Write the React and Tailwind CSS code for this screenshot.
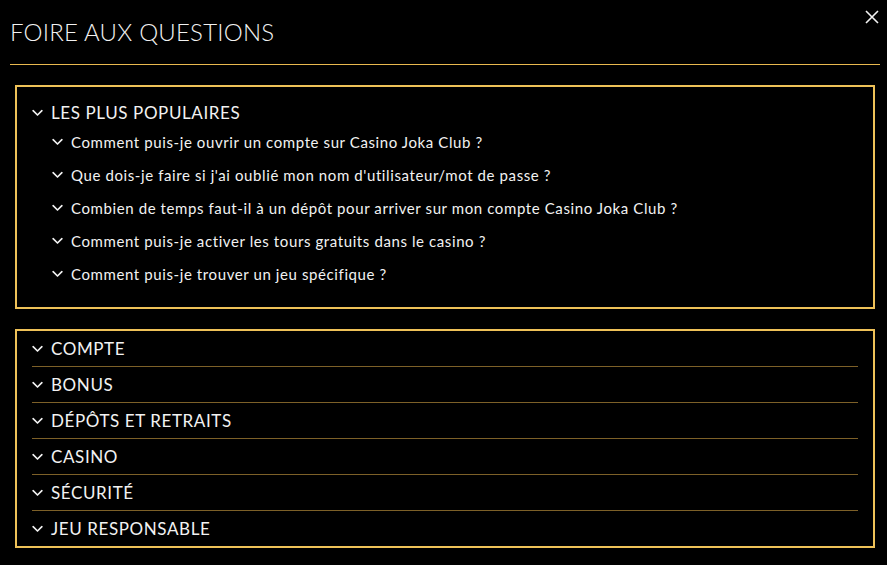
import React from 'react';

const popular = [
  'Comment puis-je ouvrir un compte sur Casino Joka Club ?',
  "Que dois-je faire si j'ai oublié mon nom d'utilisateur/mot de passe ?",
  'Combien de temps faut-il à un dépôt pour arriver sur mon compte Casino Joka Club ?',
  'Comment puis-je activer les tours gratuits dans le casino ?',
  'Comment puis-je trouver un jeu spécifique ?',
];

const sections = ['COMPTE', 'BONUS', 'DÉPÔTS ET RETRAITS', 'CASINO', 'SÉCURITÉ', 'JEU RESPONSABLE'];

const Chevron = ({ className = '' }) => (
  <svg viewBox="0 0 12 8" className={`w-[11px] h-[8px] shrink-0 ${className}`} fill="none">
    <path d="M1.2 1.5 L6 6.2 L10.8 1.5" stroke="#f2f2f2" strokeWidth="1.8" strokeLinecap="round" strokeLinejoin="round" />
  </svg>
);

export default function App() {
  return (
    <div className="w-[887px] h-[565px] bg-black text-[#f2f2f2] overflow-hidden relative" style={{ fontFamily: 'Lato, "Liberation Sans", sans-serif' }}>
      <button className="absolute right-[8px] top-[10px] w-[14px] h-[14px]">
        <svg viewBox="0 0 14 14" className="w-[14px] h-[14px]">
          <path d="M1 1 L13 13 M13 1 L1 13" stroke="#f2f2f2" strokeWidth="1.6" />
        </svg>
      </button>

      <div className="px-[10px] pr-[7px]">
        <h1 className="pt-[17px] pb-[17px] text-[24px] leading-[30px] font-light tracking-[0.2px]">FOIRE AUX QUESTIONS</h1>
        <div className="h-px bg-[#e9b94f]" />
      </div>

      <div className="mx-[15px] mr-[12px] mt-[20px] border-2 border-[#eec158] pt-[14px] pb-[17px] pl-[15px]">
        <div className="flex items-center gap-[8px] h-[24px]">
          <Chevron />
          <span className="text-[17px] leading-[24px] tracking-[0.6px]">LES PLUS POPULAIRES</span>
        </div>
        <ul className="pl-[20px]">
          {popular.map((q) => (
            <li key={q} className="flex items-center gap-[8px] h-[33px]">
              <Chevron />
              <span className="text-[15px] leading-[20px] tracking-[0.6px]">{q}</span>
            </li>
          ))}
        </ul>
      </div>

      <div className="mx-[15px] mr-[12px] mt-[20px] border-2 border-[#eec158] pl-[15px] pr-[15px]">
        {sections.map((s, i) => (
          <div key={s} className={`flex items-center gap-[8px] h-[35px] ${i > 0 ? 'h-[36px] border-t border-[#7d6028]' : ''}`}>
            <Chevron />
            <span className="text-[17px] leading-[24px] tracking-[0.6px]">{s}</span>
          </div>
        ))}
      </div>
    </div>
  );
}
